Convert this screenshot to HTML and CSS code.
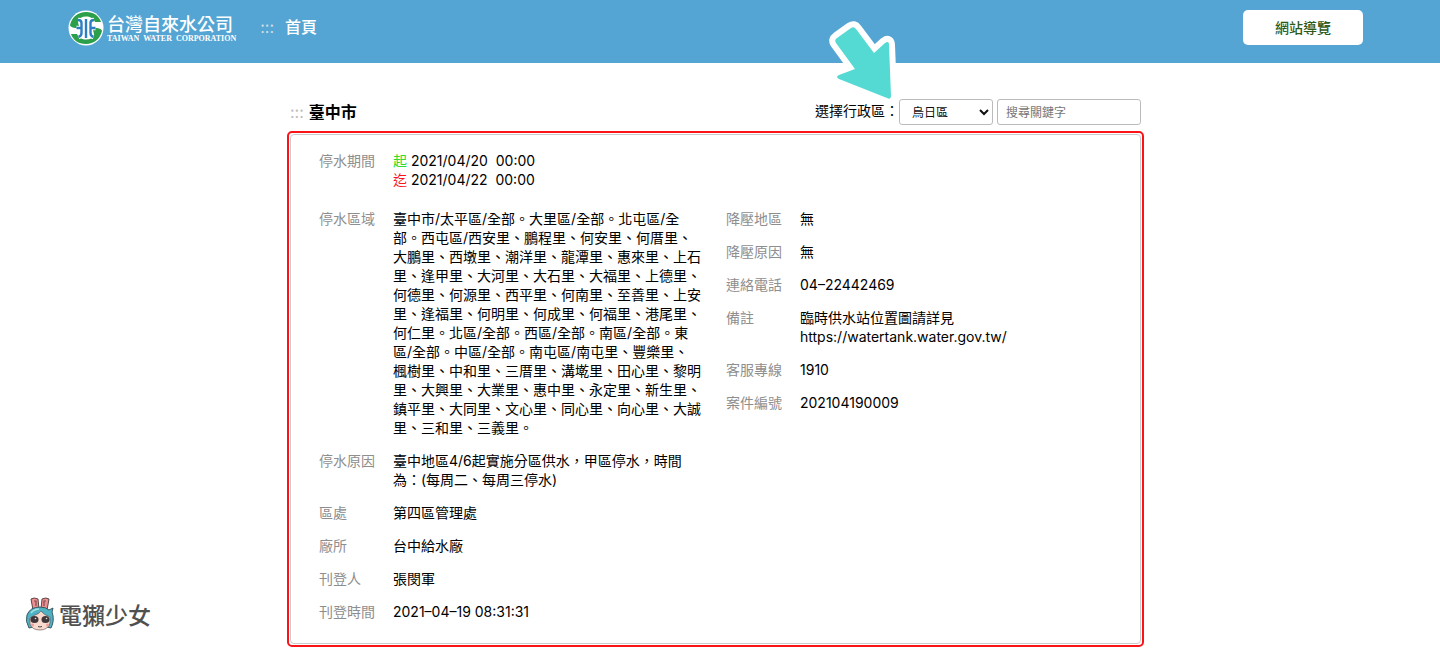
FILE: index.html
```html
<!DOCTYPE html>
<html lang="zh-Hant-TW">
<head>
<meta charset="utf-8">
<meta name="viewport" content="width=device-width, initial-scale=1">
<title>台灣自來水公司</title>
<link rel="stylesheet" href="styles.css">
</head>
<body>
<header class="site-header">
  <a class="brand" href="#">
    <svg class="brand-mark" viewBox="0 0 36 36" aria-hidden="true">
      <circle cx="18" cy="18" r="17.500" fill="#fff"/>
      <path d="M2 15C4 7 10 2 18 2S31 6 33 12H27C25 8 22 6.500 18 6.500S11 8 10 11c0 3 1 5 2.500 7H7Q2 17 2 15Z" fill="#2b9f4a"/>
      <path d="M34 21C32 29 26 34 18 34S5 30 3 24h6C11 28 14 29.500 18 29.500S25 28 26 25c0-3-1-5-2.500-7H29Q34 19 34 21Z" fill="#2b9f4a"/>
      <g fill="none" stroke-linejoin="round">
        <path d="M18 9v19M10 10q3.500 0 3.500 3V23q0 3-3 4M26 10q-3.500 0-3.500 3V23q0 3 3 4M8.500 18h5M27.500 18h-5" stroke="#fff" stroke-width="4.600"/>
        <path d="M18 9v19M10 10q3.500 0 3.500 3V23q0 3-3 4M26 10q-3.500 0-3.500 3V23q0 3 3 4M8.500 18h5M27.500 18h-5" stroke="#2e7fc2" stroke-width="2.400"/>
      </g>
    </svg>
    <span class="brand-text">
      <span class="brand-name">台灣自來水公司</span>
      <span class="brand-sub">TAIWAN&nbsp; WATER&nbsp; CORPORATION</span>
    </span>
  </a>
  <nav class="site-nav">
    <a class="skip skip-light" href="#" accesskey="U">:::</a>
    <a class="home-link" href="#">首頁</a>
  </nav>
  <button class="sitemap-button" type="button">網站導覽</button>
</header>

<main class="page">
  <div class="toolbar">
    <a class="skip" href="#" accesskey="C">:::</a>
    <h1 class="city">臺中市</h1>
    <form class="filters">
      <label for="district">選擇行政區：</label>
      <select id="district" class="field district"><option>烏日區</option></select>
      <input id="keyword" class="field keyword" type="text" placeholder="搜尋關鍵字" aria-label="搜尋關鍵字">
      <svg class="pointer" viewBox="0 0 78 90" aria-hidden="true">
        <path d="M10 28Q8 25 11 23L25 13Q28 11 30 14L48 38 59 28Q63 25 63 30L65 81Q65 85 61 83L13 64Q9 62 13 60L29 54Z" fill="none" stroke="#fff" stroke-width="12" stroke-linejoin="round"/>
        <path d="M10 28Q8 25 11 23L25 13Q28 11 30 14L48 38 59 28Q63 25 63 30L65 81Q65 85 61 83L13 64Q9 62 13 60L29 54Z" fill="#55d9d3"/>
      </svg>
    </form>
  </div>

  <div class="highlight">
    <article class="notice">
      <dl class="details">
        <div class="row"><dt>停水期間</dt><dd><span class="start">起</span> 2021/04/20&nbsp; 00:00<br><span class="end">迄</span> 2021/04/22&nbsp; 00:00</dd></div>
      </dl>
      <div class="columns">
        <dl class="details">
          <div class="row"><dt>停水區域</dt><dd>臺中市/太平區/全部。大里區/全部。北屯區/全部。西屯區/西安里、鵬程里、何安里、何厝里、大鵬里、西墩里、潮洋里、龍潭里、惠來里、上石里、逢甲里、大河里、大石里、大福里、上德里、何德里、何源里、西平里、何南里、至善里、上安里、逢福里、何明里、何成里、何福里、港尾里、何仁里。北區/全部。西區/全部。南區/全部。東區/全部。中區/全部。南屯區/南屯里、豐樂里、楓樹里、中和里、三厝里、溝墘里、田心里、黎明里、大興里、大業里、惠中里、永定里、新生里、鎮平里、大同里、文心里、同心里、向心里、大誠里、三和里、三義里。</dd></div>
          <div class="row"><dt>停水原因</dt><dd>臺中地區4/6起實施分區供水，甲區停水，時間為：(每周二、每周三停水)</dd></div>
          <div class="row"><dt>區處</dt><dd>第四區管理處</dd></div>
          <div class="row"><dt>廠所</dt><dd>台中給水廠</dd></div>
          <div class="row"><dt>刊登人</dt><dd>張閔軍</dd></div>
          <div class="row"><dt>刊登時間</dt><dd>2021–04–19 08:31:31</dd></div>
        </dl>
        <dl class="details">
          <div class="row"><dt>降壓地區</dt><dd>無</dd></div>
          <div class="row"><dt>降壓原因</dt><dd>無</dd></div>
          <div class="row"><dt>連絡電話</dt><dd>04–22442469</dd></div>
          <div class="row"><dt>備註</dt><dd>臨時供水站位置圖請詳見<br>https://watertank.water.gov.tw/</dd></div>
          <div class="row"><dt>客服專線</dt><dd>1910</dd></div>
          <div class="row"><dt>案件編號</dt><dd>202104190009</dd></div>
        </dl>
      </div>
    </article>
  </div>
</main>

<div class="watermark">
  <svg class="mascot" viewBox="0 0 28 34" aria-hidden="true">
    <path d="M5 2Q8 0 12 2L13 12 7 13ZM16 2q4-2 7 0l-2 11-6-1Z" fill="#ee8f90" stroke="#5a4648" stroke-width="1"/>
    <path d="M8 4h2v5M20 4h-2v5" fill="none" stroke="#7b4d50" stroke-width="1.200"/>
    <path d="M3 31Q-1 24 1 18 4 10 14 10q6 0 9 3l4-2-1 4q3 8-1 16l-4-1H7Z" fill="#4fb3c4" stroke="#385961" stroke-width="1"/>
    <path d="M4 21L9 18q4-1 6-4 3 4 9 6v6q-2 7-10 7T4 27Z" fill="#f8d9ce" stroke="#5a4648" stroke-width=".6"/>
    <ellipse cx="8.500" cy="22.500" rx="4" ry="3.600" fill="#3f3639"/>
    <ellipse cx="19.500" cy="22.500" rx="4" ry="3.600" fill="#3f3639"/>
    <path d="M12 29.500q2 1 4 0" stroke="#4c4145" fill="none"/>
    <circle cx="9.500" cy="21.500" r=".8" fill="#ddd"/><circle cx="20.500" cy="21.500" r=".8" fill="#ddd"/>
    <circle cx="6.500" cy="28" r="1.500" fill="#ef9c9a"/><circle cx="21.500" cy="28" r="1.500" fill="#ef9c9a"/>
    <path d="M5 16Q8 12 13 12" stroke="#a5e4e8" stroke-width="1.500" fill="none"/>
  </svg>
  <span>電獺少女</span>
</div>
</body>
</html>
```
FILE: styles.css
```css
* {
  box-sizing: border-box;
}

body {
  margin: 0;
  background: #fff;
  color: #000;
  font-family: Inter, "Noto Sans CJK TC", sans-serif;
  font-size: 14px;
  line-height: 19px;
}

a {
  color: inherit;
  text-decoration: none;
}

.site-header {
  display: flex;
  align-items: flex-start;
  padding: 10px 77px 17px 68px;
  background: #54a5d4;
  color: #fff;
}

.brand {
  display: flex;
  align-items: center;
  gap: 3px;
}

.brand-mark {
  width: 36px;
  height: 36px;
}

.brand-text {
  display: flex;
  flex-direction: column;
}

.brand-name {
  font-family: "Noto Sans CJK TC", sans-serif;
  font-size: 18px;
  font-weight: 500;
  line-height: 22px;
}

.brand-sub {
  font-family: "Liberation Serif", serif;
  font-size: 8px;
  font-weight: bold;
  line-height: 10px;
}

.site-nav {
  display: flex;
  align-items: center;
  gap: 11px;
  margin-left: 24px;
  height: 34px;
}

.skip {
  color: #bbb;
  font-size: 16px;
}

.skip-light {
  color: #d5dce2;
}

.home-link {
  font-size: 16px;
  font-weight: 500;
}

.sitemap-button {
  margin-left: auto;
  padding: 8px 32px;
  border: 0;
  border-radius: 5px;
  background: #fff;
  color: #2c5a18;
  font: inherit;
  font-weight: 500;
}

.page {
  max-width: 866px;
  margin: 0 auto;
  padding: 36px 9px 0 0;
}

.toolbar {
  display: flex;
  align-items: center;
  gap: 5px;
  padding: 0 3px;
  height: 26px;
}

.city {
  margin: 0;
  font-size: 16px;
  font-weight: 700;
}

.filters {
  position: relative;
  display: flex;
  align-items: center;
  margin-left: auto;
}

.filters label {
  padding-bottom: 3px;
}

.field {
  height: 26px;
  border: 1px solid #bbb;
  border-radius: 3px;
  background: #fff;
  color: #111;
  font-family: inherit;
}

.district {
  width: 94px;
  padding: 0 0 0 8px;
  font-size: 12px;
}

.keyword {
  width: 144px;
  margin-left: 4px;
  padding: 0 8px;
  font-size: 12px;
}

.keyword::placeholder {
  color: #777;
}

.pointer {
  position: absolute;
  top: -84px;
  right: 237px;
  width: 78px;
  height: 90px;
}

.highlight {
  margin-top: 6px;
  padding: 1px;
  border: 2px solid #fa1419;
  border-radius: 5px;
}

.notice {
  padding: 16px 28px 22px;
  border: 1px solid #ccc;
  border-radius: 4px;
}

.details {
  display: flex;
  flex-direction: column;
  gap: 14px;
  margin: 0;
}

.columns {
  display: flex;
  gap: 25px;
  margin-top: 20px;
}

.row {
  display: grid;
  grid-template-columns: 74px 308px;
}

.row dt {
  color: #8e8e8e;
}

.row dd {
  margin: 0;
}

.start {
  color: #2ddc2d;
}

.end {
  color: #fa1419;
}

.watermark {
  position: absolute;
  left: 26px;
  top: 597px;
  display: flex;
  align-items: flex-start;
  gap: 5px;
  color: #505050;
  font-size: 23px;
  font-weight: 500;
  line-height: 38px;
}

.mascot {
  width: 28px;
  height: 34px;
}
```
